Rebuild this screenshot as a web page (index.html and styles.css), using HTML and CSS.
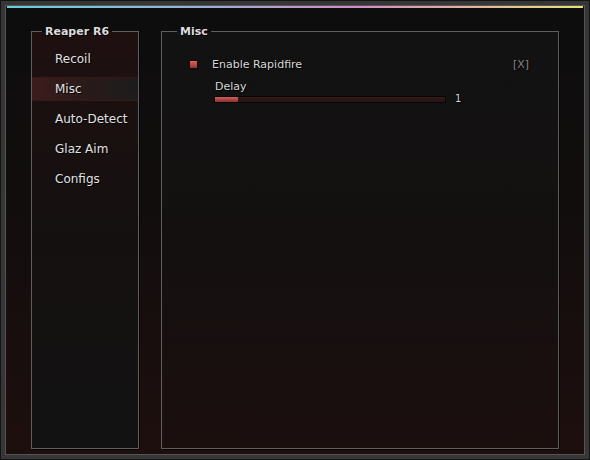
FILE: index.html
```html
<!DOCTYPE html>
<html lang="en">
<head>
    <meta charset="UTF-8">
    <title>Reaper R6</title>
    <link rel="stylesheet" href="styles.css">
</head>
<body>
    <div class="frame">
        <div class="inner">
            <div class="accent"></div>
            <div class="panels">
                <fieldset class="box nav">
                    <legend>Reaper R6</legend>
                    <div class="nav-item">Recoil</div>
                    <div class="nav-item active">Misc</div>
                    <div class="nav-item">Auto-Detect</div>
                    <div class="nav-item">Glaz Aim</div>
                    <div class="nav-item">Configs</div>
                </fieldset>
                <fieldset class="box group">
                    <legend>Misc</legend>
                    <div class="option">
                        <span class="check"></span>
                        <span class="option-label">Enable Rapidfire</span>
                        <span class="key">[X]</span>
                    </div>
                    <div class="slider">
                        <div class="slider-label">Delay</div>
                        <div class="slider-row">
                            <div class="track"><div class="fill" style="width: 10%;"></div></div>
                            <span class="value">1</span>
                        </div>
                    </div>
                </fieldset>
            </div>
        </div>
    </div>
</body>
</html>
```

FILE: styles.css
```css
body {
    margin: 0;
    background: #000;
    font-family: "DejaVu Sans", Verdana, sans-serif;
    color: #dedede;
}
.frame {
    width: 590px;
    height: 460px;
    box-sizing: border-box;
    border: 1px solid #141414;
    background: #363636;
    padding: 4px;
}
.inner {
    height: 100%;
    box-sizing: border-box;
    border: 1px solid #545454;
    background: linear-gradient(180deg, #0d0d0d, #110d0d 40%, #1d0f0e);
    display: flex;
    flex-direction: column;
}
.accent {
    height: 2px;
    margin: 0 1px;
    background: linear-gradient(90deg, #66d0da, #92b4da 30%, #d48ac8 60%, #e2b0a0 80%, #e6e474);
}
.panels {
    flex: 1;
    display: flex;
    gap: 22px;
    padding: 17px 25px 5px 25px;
}
.box {
    margin: 0;
    padding: 0;
    min-width: 0;
    border: 1px solid #5e5e5e;
    box-shadow: 1px 1px 0 #050505;
}
.box legend {
    margin-left: 10px;
    padding: 0 3px;
    font-size: 11px;
    font-weight: bold;
    line-height: 13px;
    color: #dcdcdc;
    text-shadow: 1px 1px 0 #000;
}
.group legend {
    margin-left: 15px;
}
.nav {
    width: 108px;
    box-sizing: border-box;
    padding-top: 9px;
    background: linear-gradient(180deg, #1f1010, #161010 40%, #121212);
}
.nav-item {
    height: 24px;
    margin-bottom: 6px;
    padding-left: 23px;
    font-size: 12px;
    line-height: 24px;
    color: #e2e2e2;
    text-shadow: 1px 1px 0 #000;
}
.nav-item.active {
    box-sizing: border-box;
    border-top: 1px solid #3a1616;
    border-bottom: 1px solid #3a1616;
    line-height: 22px;
    background: linear-gradient(90deg, #3c1c1c, #2a1a1a 50%, #1c1c1c);
}
.group {
    flex: 1;
    padding-top: 19px;
    background: linear-gradient(180deg, #121212, #141010 50%, #1b0f0e);
}
.option {
    display: flex;
    align-items: center;
    height: 14px;
    font-size: 11px;
}
.check {
    width: 9px;
    height: 9px;
    box-sizing: border-box;
    margin-left: 27px;
    border: 1px solid #1a0606;
    background: linear-gradient(180deg, #d8645c, #903434);
}
.option-label {
    margin-left: 14px;
    color: #d6d6d6;
    text-shadow: 1px 1px 0 #000;
}
.key {
    margin-left: auto;
    margin-right: 29px;
    font-size: 11px;
    color: #858585;
    text-shadow: 1px 1px 0 #000;
}
.slider {
    margin-top: 9px;
    padding-left: 52px;
}
.slider-label {
    padding-left: 1px;
    font-size: 11px;
    line-height: 13px;
    color: #d6d6d6;
    text-shadow: 1px 1px 0 #000;
}
.slider-row {
    display: flex;
    align-items: center;
    margin-top: 1px;
}
.track {
    width: 232px;
    height: 7px;
    box-sizing: border-box;
    border: 1px solid #0a0505;
    background: linear-gradient(180deg, #341a1a, #231313);
}
.fill {
    height: 100%;
    background: linear-gradient(180deg, #d06058, #8a3030);
}
.value {
    margin-left: 9px;
    font-size: 10px;
    line-height: 10px;
    color: #cfcfcf;
    text-shadow: 1px 1px 0 #000;
}
```
